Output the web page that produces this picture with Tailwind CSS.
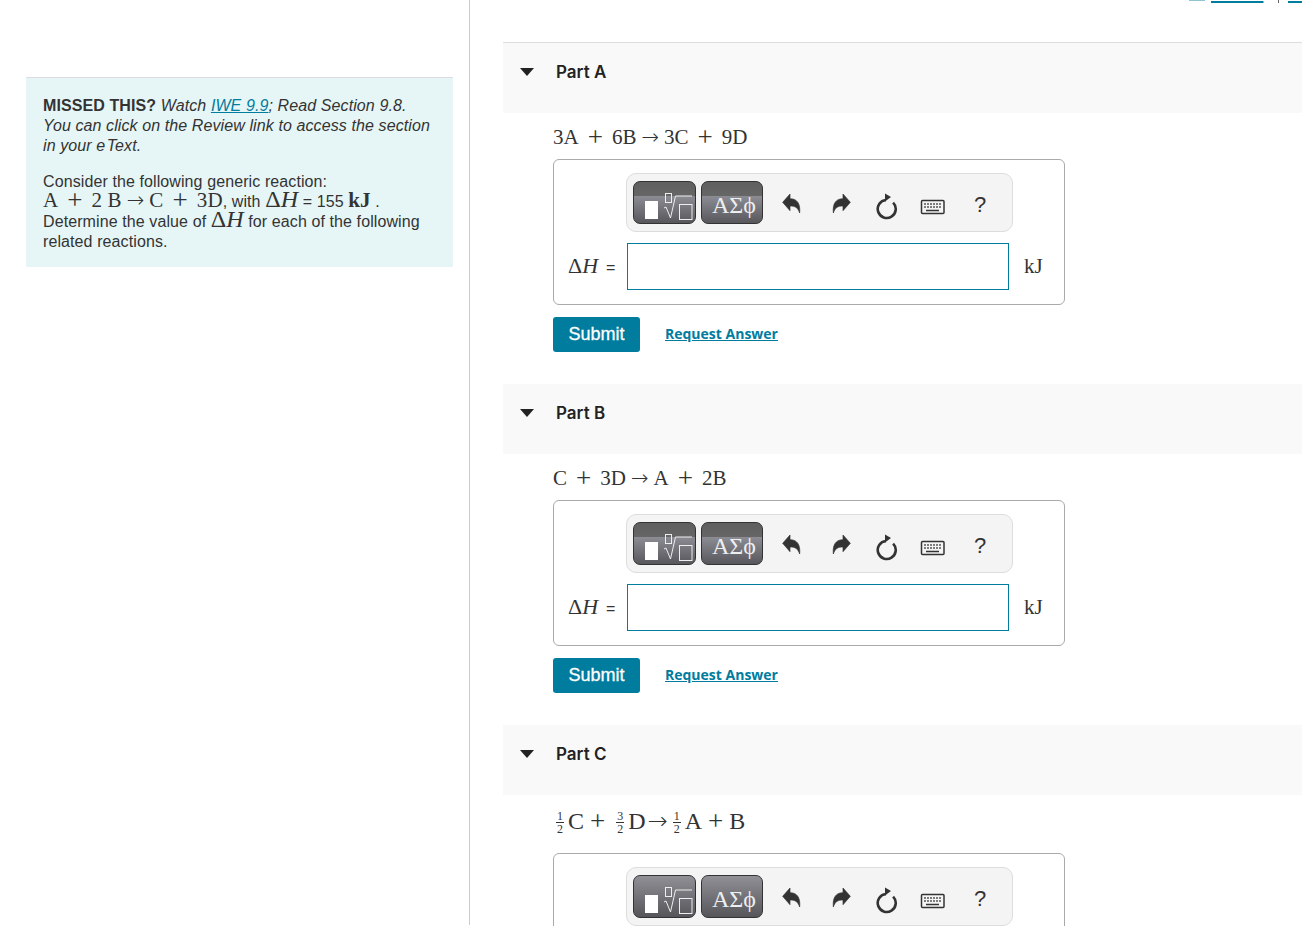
<!DOCTYPE html>
<html lang="en">
<head>
  <meta charset="UTF-8" />
  <title>Enthalpy of related reactions</title>
  <script src="https://cdn.jsdelivr.net/npm/@tailwindcss/browser@4"></script>
</head>
<body class="bg-white text-[#333] font-['Liberation_Sans',sans-serif] text-base leading-5 overflow-hidden">
<div class="flex h-[926px] w-[1302px] overflow-hidden">

  <!-- Left column -->
  <aside class="w-[470px] h-[925px] shrink-0 border-r border-[#ccc] pt-[77px] pl-[26px]">
    <div class="w-[427px] h-[190px] bg-[#e6f6f6] border-t border-[#ddd] pt-[18px] pl-[17px] pr-2 tracking-[0.1px]">
      <p class="italic"><b class="not-italic">MISSED THIS?</b> Watch <a href="#" class="text-[#007c9e] underline">IWE 9.9</a>; Read Section 9.8.<br>You can click on the Review link to access the section<br>in your e&#8202;Text.</p>
      <p class="mt-4">Consider the following generic reaction:</p>
      <p class="whitespace-nowrap"><span class="font-['Liberation_Serif',serif] text-[21px] leading-[0]">A<span class="mx-[9px] text-[27px] align-[-2px]">+</span>2 B<span class="font-['DejaVu_Sans',sans-serif] font-extralight mx-[5px]">→</span>C<span class="mx-[9px] text-[27px] align-[-2px]">+</span>3D</span>, with <span class="font-['Liberation_Serif',serif] text-[24px] leading-[0]">Δ<i>H</i></span> = 155 <span class="font-['Liberation_Serif',serif] font-bold text-[21px] leading-[0]">kJ</span> .</p>
      <p>Determine the value of <span class="font-['Liberation_Serif',serif] text-[24px] leading-[0]">Δ<i>H</i></span> for each of the following</p>
      <p>related reactions.</p>
    </div>
  </aside>

  <!-- Right column -->
  <main class="flex-1 pl-[33px] min-w-0">
    <div class="h-[42px] relative overflow-hidden text-[#007c9e]">
      <div class="absolute right-0 -top-[15px] flex items-center whitespace-nowrap">
        <span class="w-4 h-3 mr-[6px] bg-[#8fc4d2]"></span>
        <a href="#" class="underline decoration-2 w-[58px]">Review</a>
        <span class="w-px h-4 bg-[#666] mx-[9px]"></span>
        <a href="#" class="underline decoration-2 w-[14px] overflow-hidden">Con</a>
      </div>
    </div>
    <div id="parts"></div>
  </main>
</div>

<script>
  const arrow = `<span class="font-['DejaVu_Sans',sans-serif] font-extralight mx-[5px]">→</span>`;
  const plus = `<span class="mx-[9px] text-[27px]">+</span>`;
  const plusC = `<span class="mx-[6px] text-[27px]">+</span>`;

  const parts = [
    { name: "Part A", band: true, head: "border-[#ddd]", mathBox: "mt-[12px] h-[23px] text-[21px]", math: `3A${plus}6B${arrow}3C${plus}9D` },
    { name: "Part B", band: true, head: "border-transparent", mathBox: "mt-[12px] h-[23px] text-[21px]", math: `C${plus}3D${arrow}A${plus}2B` },
    { name: "Part C", band: false, head: "border-transparent", mathBox: "mt-[4px] h-[43px] text-[24px]", math: `${frac(1, "ml-[3px]")}C${plusC}${frac(3, "ml-[5px]")}D<span class="font-['DejaVu_Sans',sans-serif] font-extralight mx-[2px]">→</span>${frac(1, "ml-[3px]")}A${plusC}B` },
  ];

  function frac(top, cls = "") {
    return `<span class="inline-flex flex-col items-center text-[12px] leading-[12px] mt-[3px] mr-[4px] ${cls}"><span class="border-b border-[#333] px-px">${top}</span><span>2</span></span>`;
  }

  function toolButton(band, width, inner) {
    const bg = band
      ? "bg-[linear-gradient(#5f5f5f_0,#666_14px,#8c8c94_14px,#57575c_100%)]"
      : "bg-[linear-gradient(#909096,#55555a)]";
    return `<div class="relative h-[43px] ${width} ${bg} rounded-[7px] border border-[#333] text-[#eee]">${inner}</div>`;
  }

  function toolbar(band) {
    return `
      <div class="ml-[72px] w-[387px] h-[59px] bg-[#f4f4f4] border border-[#ddd] rounded-[10px] flex pt-[7px] pl-[6px]">
        ${toolButton(band, "w-[63px]", `
          <svg class="absolute -left-px -top-px" width="63" height="43" fill="none" stroke="#eee" stroke-width="1">
            <rect x="12" y="20" width="13" height="18" fill="#fff" stroke="none"/>
            <rect x="32.5" y="12.5" width="6" height="9"/>
            <path d="M31 27l2-1 4.500 11 5-22H59"/>
            <rect x="46.500" y="23.500" width="12.500" height="15"/>
          </svg>`)}
        ${toolButton(band, "w-[62px] ml-[5px] flex items-center justify-center pt-[5px] pl-1 font-['Liberation_Serif',serif] text-[24px]", "ΑΣϕ")}
        <svg class="ml-[19px] mt-[12px]" width="20" height="22" viewBox="36 40 60 66" fill="#333" stroke="#333" stroke-width="2"><path d="M38 68L60 43V57C80 57 92 70 89 100C84 84 76 79 60 79V93Z"/></svg>
        <svg class="ml-[29px] mt-[12px] -scale-x-100" width="20" height="22" viewBox="36 40 60 66" fill="#333" stroke="#333" stroke-width="2"><path d="M38 68L60 43V57C80 57 92 70 89 100C84 84 76 79 60 79V93Z"/></svg>
        <svg class="ml-[23px] mt-[11px]" width="24" height="28" viewBox="0 0 24 28" fill="none"><path d="M19.100 10.600A9 9 0 1 1 12 8" stroke="#333" stroke-width="2.600"/><path d="M11 1.500L17 5L11 9.500z" fill="#333"/></svg>
        <svg class="ml-[22px] mt-[18px]" width="26" height="16" viewBox="0 0 26 16" fill="none"><rect x="1.500" y="1.500" width="22.500" height="13" rx="1" fill="#f4f4f4" stroke="#333" stroke-width="1.500"/><path d="M4 5h18M4 8h18" stroke="#555" stroke-width="1.500" stroke-dasharray="2 1"/><path d="M6 11.500h13" stroke="#333" stroke-width="1.500"/></svg>
        <span class="ml-[28px] mt-[12px] text-[22px] leading-6">?</span>
      </div>`;
  }

  function renderPart(p) {
    const serif = "font-['Liberation_Serif',serif]";
    return `
      <section class="h-[341px] w-[799px]">
        <div class="h-[71px] bg-[#f9f9f9] bg-clip-padding border-t ${p.head} flex items-start pl-[17px] pt-[19px] font-['Inter',sans-serif] font-semibold text-[17px] text-[#222]">
          <svg width="14" height="8" viewBox="0 0 14 8" class="mt-[6px]"><path d="M0 0h14L7 8z" fill="#222"/></svg>
          <span class="ml-[22px]">${p.name}</span>
        </div>
        <div class="ml-[50px]">
          <p class="${serif} ${p.mathBox} flex items-center leading-6 whitespace-nowrap">${p.math}</p>
          <div class="mt-[11px] w-[512px] h-[146px] border border-[#aaa] rounded-[6px] pt-[13px]">
            ${toolbar(p.band)}
            <div class="flex items-center mt-[11px] pl-[14px]">
              <span class="${serif} text-[22px] w-[59px] pt-[3px] whitespace-nowrap">Δ<i>H</i><span class="font-['Liberation_Sans',sans-serif] text-base ml-[8px]">=</span></span>
              <div class="w-[382px] h-[47px] border border-[#007c9e] bg-white"></div>
              <span class="${serif} text-[21px] ml-[15px] -mt-px">kJ</span>
            </div>
          </div>
          <div class="flex items-center mt-[12px]">
            <button class="w-[87px] h-[35px] pb-[2px] bg-[#007c9e] rounded-[3px] text-white text-[18px] [-webkit-text-stroke:0.3px_white]">Submit</button>
            <a href="#" class="ml-[25px] -mt-[2px] font-['Open_Sans',sans-serif] font-bold text-[14px] text-[#007c9e] underline">Request Answer</a>
          </div>
        </div>
      </section>`;
  }

  document.getElementById("parts").innerHTML = parts.map(renderPart).join("");
</script>
</body>
</html>
